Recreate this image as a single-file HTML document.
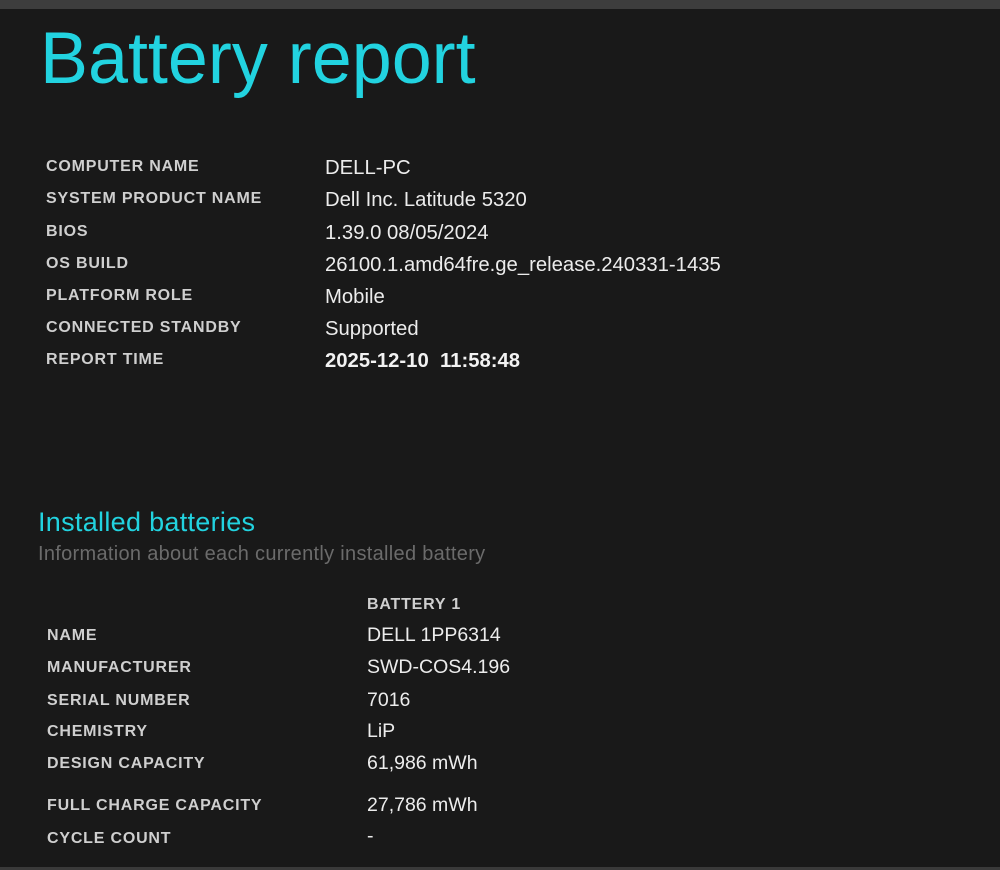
<!DOCTYPE html>
<html><head><meta charset="utf-8"><style>
html,body{margin:0;padding:0;}
body{width:1000px;height:870px;background:#191919;position:relative;overflow:hidden;font-family:"Liberation Sans",sans-serif;}
.top{position:absolute;left:0;top:0;width:1000px;height:9px;background:#3d3d3d;}
.bot{position:absolute;left:0;top:867px;width:1000px;height:3px;background:#3a3a3a;}
.t{position:absolute;white-space:nowrap;line-height:1;}
.title{left:40px;top:22px;font-size:73px;color:#22d3e0;transform:scaleX(0.985);transform-origin:left top;}
.l{font-size:16px;font-weight:bold;color:#cfcfcf;letter-spacing:0.8px}
.v{font-size:19.5px;color:#ececec;}
.v2{font-size:20.3px;}
.h2{left:38px;top:509px;font-size:27px;color:#22d3e0;letter-spacing:0.3px}
.sub{left:38px;top:544px;font-size:20px;color:#6b6b6b;letter-spacing:0.3px}
</style></head><body>
<div class="top"></div>
<div class="t title">Battery report</div>

<div class="t l" style="left:46px;top:159px">COMPUTER NAME</div>
<div class="t v v2" style="left:325px;top:158px">DELL-PC</div>
<div class="t l" style="left:46px;top:191px">SYSTEM PRODUCT NAME</div>
<div class="t v v2" style="left:325px;top:190px">Dell Inc. Latitude 5320</div>
<div class="t l" style="left:46px;top:224px">BIOS</div>
<div class="t v v2" style="left:325px;top:223px">1.39.0 08/05/2024</div>
<div class="t l" style="left:46px;top:256px">OS BUILD</div>
<div class="t v v2" style="left:325px;top:255px">26100.1.amd64fre.ge_release.240331-1435</div>
<div class="t l" style="left:46px;top:288px">PLATFORM ROLE</div>
<div class="t v v2" style="left:325px;top:287px">Mobile</div>
<div class="t l" style="left:46px;top:320px">CONNECTED STANDBY</div>
<div class="t v v2" style="left:325px;top:319px">Supported</div>
<div class="t l" style="left:46px;top:352px">REPORT TIME</div>
<div class="t v v2" style="left:325px;top:351px;font-weight:bold;color:#f2f2f2">2025-12-10&nbsp; 11:58:48</div>

<div class="t h2">Installed batteries</div>
<div class="t sub">Information about each currently installed battery</div>

<div class="t l" style="left:367px;top:597px">BATTERY 1</div>
<div class="t l" style="left:47px;top:628px">NAME</div>
<div class="t v" style="left:367px;top:626px">DELL 1PP6314</div>
<div class="t l" style="left:47px;top:660px">MANUFACTURER</div>
<div class="t v" style="left:367px;top:658px">SWD-COS4.196</div>
<div class="t l" style="left:47px;top:693px">SERIAL NUMBER</div>
<div class="t v" style="left:367px;top:691px">7016</div>
<div class="t l" style="left:47px;top:724px">CHEMISTRY</div>
<div class="t v" style="left:367px;top:722px">LiP</div>
<div class="t l" style="left:47px;top:756px">DESIGN CAPACITY</div>
<div class="t v" style="left:367px;top:754px">61,986 mWh</div>
<div class="t l" style="left:47px;top:798px">FULL CHARGE CAPACITY</div>
<div class="t v" style="left:367px;top:796px">27,786 mWh</div>
<div class="t l" style="left:47px;top:831px">CYCLE COUNT</div>
<div class="t v" style="left:367px;top:827px">-</div>
<div class="bot"></div>
</body></html>
